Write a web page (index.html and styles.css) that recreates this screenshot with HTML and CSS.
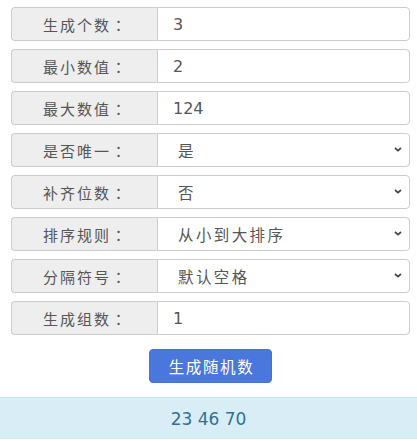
FILE: index.html
```html
<!DOCTYPE html>
<html>
<head>
    <meta charset="utf-8">
    <title>随机数生成器</title>
    <link rel="stylesheet" href="styles.css">
</head>
<body>
    <form class="generator">
        <div class="row">
            <span class="addon">生成个数<i class="colon">：</i></span>
            <input class="field" type="text" value="3">
        </div>
        <div class="row">
            <span class="addon">最小数值<i class="colon">：</i></span>
            <input class="field" type="text" value="2">
        </div>
        <div class="row">
            <span class="addon">最大数值<i class="colon">：</i></span>
            <input class="field" type="text" value="124">
        </div>
        <div class="row">
            <span class="addon">是否唯一<i class="colon">：</i></span>
            <span class="select-wrap">
                <select class="field">
                    <option>是</option>
                    <option>否</option>
                </select>
                <svg class="caret" viewBox="0 0 8 5"><path d="M1 1l3 2.6L7 1"/></svg>
            </span>
        </div>
        <div class="row">
            <span class="addon">补齐位数<i class="colon">：</i></span>
            <span class="select-wrap">
                <select class="field">
                    <option>否</option>
                    <option>是</option>
                </select>
                <svg class="caret" viewBox="0 0 8 5"><path d="M1 1l3 2.6L7 1"/></svg>
            </span>
        </div>
        <div class="row">
            <span class="addon">排序规则<i class="colon">：</i></span>
            <span class="select-wrap">
                <select class="field">
                    <option>从小到大排序</option>
                    <option>从大到小排序</option>
                    <option>不排序</option>
                </select>
                <svg class="caret" viewBox="0 0 8 5"><path d="M1 1l3 2.6L7 1"/></svg>
            </span>
        </div>
        <div class="row">
            <span class="addon">分隔符号<i class="colon">：</i></span>
            <span class="select-wrap">
                <select class="field">
                    <option>默认空格</option>
                    <option>逗号</option>
                    <option>换行</option>
                </select>
                <svg class="caret" viewBox="0 0 8 5"><path d="M1 1l3 2.6L7 1"/></svg>
            </span>
        </div>
        <div class="row">
            <span class="addon">生成组数<i class="colon">：</i></span>
            <input class="field" type="text" value="1">
        </div>
        <div class="actions">
            <button type="button" class="btn">生成随机数</button>
        </div>
    </form>
    <div class="result">23 46 70</div>
</body>
</html>
```

FILE: styles.css
```css
body {
    margin: 0;
    background: #fff;
    color: #555;
    font-family: "Noto Sans CJK SC", "DejaVu Sans", sans-serif;
    font-size: 15px;
}

.generator {
    padding: 7px 7px 0 11px;
    margin: 0;
}

.row {
    display: flex;
    height: 34px;
    margin-bottom: 8px;
}

.addon {
    box-sizing: border-box;
    width: 146px;
    flex: none;
    display: flex;
    align-items: center;
    justify-content: center;
    padding-left: 2px;
    background: #eee;
    border: 1px solid #ccc;
    border-right: none;
    border-radius: 4px 0 0 4px;
    color: #555;
    font-size: 15px;
    letter-spacing: 2px;
}

.colon {
    font-style: normal;
    font-family: "Noto Sans CJK TC", sans-serif;
}

.field {
    box-sizing: border-box;
    flex: 1;
    min-width: 0;
    width: 100%;
    height: 34px;
    margin: 0;
    padding: 0 12px 0 15px;
    background: #fff;
    border: 1px solid #ccc;
    border-radius: 0 4px 4px 0;
    color: #555;
    font-family: "DejaVu Sans", "Noto Sans CJK SC", sans-serif;
    font-size: 16px;
    outline: none;
}

.select-wrap {
    flex: 1;
    display: flex;
    position: relative;
}

select.field {
    appearance: none;
    -webkit-appearance: none;
    padding-left: 20px;
    font-family: "Noto Sans CJK SC", sans-serif;
    font-size: 15.5px;
    letter-spacing: 2.4px;
}

.caret {
    position: absolute;
    right: 8px;
    top: 14px;
    width: 8px;
    height: 5px;
    fill: none;
    stroke: #444;
    stroke-width: 1.7;
    pointer-events: none;
}

.actions {
    display: flex;
    justify-content: center;
    padding: 6px 0 14px;
}

.btn {
    width: 123px;
    height: 34px;
    padding: 0 0 0 2px;
    background: #4a77dc;
    border: 1px solid #4570d6;
    border-radius: 4px;
    color: #fff;
    font-family: "Noto Sans CJK SC", sans-serif;
    font-size: 15.5px;
    letter-spacing: 1.6px;
    cursor: pointer;
}

.result {
    height: 42px;
    box-sizing: border-box;
    display: flex;
    align-items: center;
    justify-content: center;
    background: #d9edf7;
    border-top: 1px solid #bce8f1;
    color: #31708f;
    font-family: "DejaVu Sans", sans-serif;
    font-size: 17px;
}
```
